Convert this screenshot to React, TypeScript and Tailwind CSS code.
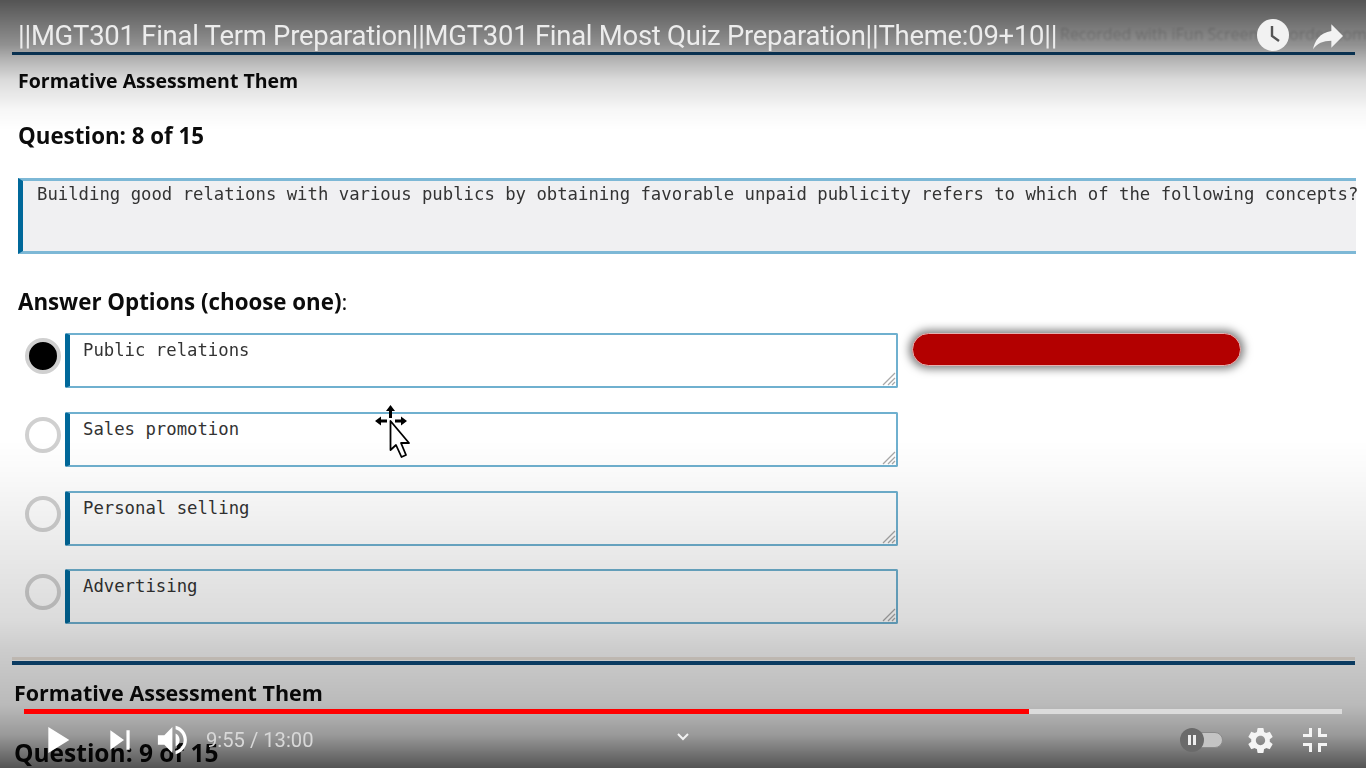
import React from "react";
import { MdSettings } from "react-icons/md";

function Grip() {
  return (
    <svg className="absolute right-0 bottom-0" width="14" height="14" viewBox="0 0 14 14" fill="none" stroke="#a8a8a8" strokeWidth="1.2">
      <path d="M1 13 L13 1" />
      <path d="M6 13 L13 6" />
      <path d="M10 13 L13 10" />
    </svg>
  );
}

function OptionRow({ label, checked, extra, children }: { label: string; checked?: boolean; extra?: string; children?: React.ReactNode }) {
  return (
    <div className={`flex items-start pl-[25px] ${extra ?? ""}`}>
      {checked ? (
        <div className="mt-[5px] w-[36px] h-[36px] rounded-full bg-black border-[4px] border-[#d0d0d0]" />
      ) : (
        <div className="mt-[5px] w-[36px] h-[36px] rounded-full bg-white border-[4px] border-[#d0d0d0]" />
      )}
      <div className="relative ml-[4px] w-[833px] h-[55px] bg-white border-2 border-[#6fb0cf] border-l-[5px] border-l-[#00689a] rounded-[2px] pl-[13px] pt-[3px] font-['DejaVu_Sans_Mono',monospace] text-[17.3px] leading-[24px] text-[#333]">
        {label}
        <Grip />
      </div>
      {children}
    </div>
  );
}

export default function App() {
  return (
    <div className="relative w-[1366px] h-[768px] overflow-hidden bg-white">
      {/* video frame */}
      <div className="flex flex-col h-[768px] pt-[52px] blur-[0.5px] text-[#0c0c0c] font-['Open_Sans',sans-serif]">
        <div className="ml-[12px] w-[1343px] h-[3px] bg-[#0f4c7c] shrink-0" />
        <div className="ml-[18px] mt-[13px] h-[26px] leading-[26px] text-[19.5px] font-bold shrink-0">Formative Assessment Them</div>
        <div className="ml-[18px] mt-[27px] h-[30px] leading-[30px] text-[22.3px] font-bold shrink-0">Question: 8 of 15</div>
        <div className="ml-[18px] mt-[27px] w-[1338px] h-[76px] shrink-0 bg-[#f0f0f2] border-y-[3px] border-y-[#7db8d6] border-l-[5px] border-l-[#00689a] pl-[14px] pt-[1px] font-['DejaVu_Sans_Mono',monospace] text-[17.3px] leading-[24px] text-[#333] whitespace-nowrap">
          Building good relations with various publics by obtaining favorable unpaid publicity refers to which of the following concepts?
        </div>
        <div className="ml-[18px] mt-[33px] h-[30px] leading-[30px] text-[22.3px] font-bold shrink-0">
          Answer Options (choose one)<span className="font-normal">:</span>
        </div>
        <div className="mt-[16px] flex flex-col gap-[24px] shrink-0">
          <OptionRow label="Public relations" checked>
            <div className="ml-[14px] w-[329px] h-[33px] rounded-full bg-[#b30000] border-[1.5px] border-[#e6b0b0] shadow-[0_0_8px_3px_rgba(0,0,0,0.5)]" />
          </OptionRow>
          <OptionRow label="Sales promotion" />
          <OptionRow label="Personal selling" />
          <OptionRow label="Advertising" extra="-mt-px" />
        </div>
        <div className="ml-[12px] mt-[33px] w-[1343px] h-[3px] bg-[#f0e8e0] shrink-0" />
        <div className="ml-[12px] mt-px w-[1343px] h-[4px] bg-[#0f4c7c] shrink-0" />
        <div className="ml-[14px] mt-[14px] h-[28px] leading-[28px] text-[21.5px] font-bold shrink-0">Formative Assessment Them</div>
        <div className="ml-[14px] mt-[30px] h-[32px] leading-[32px] text-[24.5px] font-bold shrink-0">Question: 9 of 15</div>
      </div>

      {/* watermark burned into the video */}
      <div className="absolute left-[1060px] top-[24px] text-[16px] leading-[20px] text-[#d4d4d4] blur-[1.2px] font-['Open_Sans',sans-serif] whitespace-nowrap">
        Recorded with iFun Screen Recorder.com
      </div>

      {/* cursor in the video */}
      <svg className="absolute left-[372px] top-[404px] blur-[0.3px]" width="40" height="56" viewBox="0 0 40 56">
        <path d="M18.5 1 L23 7 L20 7 L20 14 L17 14 L17 7 L14 7 Z" fill="#000" />
        <path d="M3 17 L9 12.5 L9 15.5 L15 15.5 L15 18.5 L9 18.5 L9 21.5 Z" fill="#000" />
        <path d="M35 17 L29 12.5 L29 15.5 L23 15.5 L23 18.5 L29 18.5 L29 21.5 Z" fill="#000" />
        <path d="M18.5 17 L18.5 46 L24 41 L29.5 53 L34 51 L29 39 L37 39 Z" fill="#fff" stroke="#000" strokeWidth="1.8" strokeLinejoin="round" />
      </svg>

      {/* player shade */}
      <div className="absolute inset-0 pointer-events-none bg-[linear-gradient(to_bottom,rgba(0,0,0,0.67)_0px,rgba(0,0,0,0.43)_45px,rgba(0,0,0,0.31)_58px,rgba(0,0,0,0.14)_80px,rgba(0,0,0,0.03)_110px,rgba(0,0,0,0)_130px,rgba(0,0,0,0)_440px,rgba(0,0,0,0.02)_470px,rgba(0,0,0,0.14)_620px,rgba(0,0,0,0.2)_650px,rgba(0,0,0,0.27)_705px,rgba(0,0,0,0.4)_735px,rgba(0,0,0,0.67)_768px)]" />

      {/* title bar */}
      <div className="absolute left-0 right-0 top-[17px] h-[40px] flex items-center pl-[18px] font-['Roboto',sans-serif] text-[27.45px] tracking-[-0.25px] text-[#ececec] whitespace-nowrap">
        <span className="font-normal">||MGT301 Final Term Preparation||MGT301 Final Most Quiz Preparation||Theme:09+10||</span>
      </div>
      <div className="absolute left-[1257px] top-[19px] w-[32px] h-[32px] rounded-full bg-[#f2f2f2]">
        <svg width="32" height="32" viewBox="0 0 32 32" fill="none" stroke="#555" strokeWidth="2.4">
          <path d="M15 7 L15 17 L22 22" />
        </svg>
      </div>
      <svg className="absolute left-[1308px] top-[16px]" width="40" height="40" viewBox="0 0 24 24" fill="#f2f2f2">
        <path d="M14 9V5l7 7-7 7v-4.1c-5 0-8.5 1.6-11 5.1 1-5 4-10 11-11z" />
      </svg>

      {/* progress bar */}
      <div className="absolute left-[24px] top-[709px] w-[1318px] h-[5px] flex bg-[#dcdcdc]">
        <div className="w-[1005px] h-full bg-[#ff0000]" />
      </div>

      {/* controls */}
      <div className="absolute left-0 right-0 top-[711px] h-[58px] flex items-center pl-[29px] text-[#eeeeee]">
        <svg width="58" height="58" viewBox="0 0 36 36" fill="#fff"><path d="M12 26 L18.5 22 L18.5 14 L12 10 Z M18.5 22 L25 18 L25 18 L18.5 14 Z" /></svg>
        <svg className="ml-[4px]" width="58" height="58" viewBox="0 0 36 36" fill="#fff"><path d="M12 24 L20.5 18 L12 12 V24 Z M22 12 v12 h2 V12 h-2 Z" /></svg>
        <svg className="-ml-[4px]" width="58" height="58" viewBox="0 0 36 36" fill="#fff"><path d="M8 21 L12 21 L17 26 L17 10 L12 15 L8 15 Z M19 14 L19 22 C20.48 21.32 21.5 19.77 21.5 18 C21.5 16.26 20.48 14.74 19 14 Z M19 11.29 C21.89 12.15 24 14.83 24 18 C24 21.17 21.89 23.85 19 24.71 L19 26.77 C23.01 25.86 26 22.28 26 18 C26 13.72 23.01 10.14 19 9.23 Z" /></svg>
        <span className="ml-[3px] mt-[1px] font-['Roboto',sans-serif] text-[20.2px] text-[#d8d8d8] whitespace-nowrap">9:55 / 13:00</span>
        <div className="flex-1" />
        <div className="relative w-[43px] h-[24px] mr-[22px]">
          <div className="absolute left-[8px] top-[4px] w-[35px] h-[16px] rounded-full bg-[#c4c4c4] border border-[#8a8a8a]" />
          <div className="absolute left-0 top-0 w-[24px] h-[24px] rounded-full bg-[#6a6a6a] flex items-center justify-center gap-[2px]">
            <div className="w-[3px] h-[10px] bg-[#eeeeee]" />
            <div className="w-[3px] h-[10px] bg-[#eeeeee]" />
          </div>
        </div>
        <MdSettings className="text-[#f4f4f4]" size={31} />
        <svg className="ml-[12px] mr-[24px]" width="54" height="54" viewBox="0 0 36 36" fill="#f4f4f4">
          <path d="M14 14 H10 V16 H16 V10 H14 Z M22 14 V10 H20 V16 H26 V14 Z M20 26 H22 V22 H26 V20 H20 Z M10 22 H14 V26 H16 V20 H10 Z" />
        </svg>
      </div>

      <svg className="absolute left-[675px] top-[731px]" width="16" height="12" viewBox="0 0 16 12" fill="none" stroke="#f2f2f2" strokeWidth="2">
        <path d="M3 3 L8 8 L13 3" />
      </svg>
    </div>
  );
}
